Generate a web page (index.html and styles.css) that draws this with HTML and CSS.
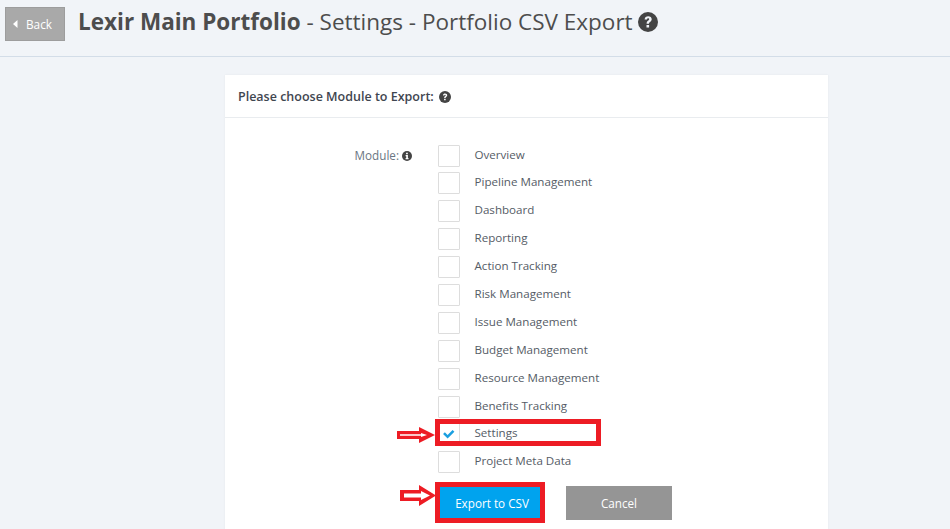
FILE: index.html
```html
<!DOCTYPE html>
<html lang="en">
<head>
<meta charset="utf-8">
<title>Portfolio CSV Export</title>
<link rel="stylesheet" href="styles.css">
</head>
<body>
<header class="top">
  <a class="back"><svg class="back-caret" viewBox="0 0 5 8"><path d="M4.5 0v8L0 4z"/></svg>Back</a>
  <h1 class="title"><strong>Lexir Main Portfolio</strong> - Settings - Portfolio CSV Export
    <svg class="help help-lg" viewBox="0 0 20 20"><circle cx="10" cy="10" r="10"/><path class="glyph" d="M6.600 7.400C6.800 5.200 8.300 4.200 10.200 4.200c2 0 3.500 1.200 3.500 3 0 1.300-.7 2-1.700 2.700-.8.6-1 .9-1 1.800H8.600c0-1.600.4-2.300 1.400-3 .8-.6 1.200-.9 1.200-1.500 0-.6-.4-1-1.100-1-.7 0-1.100.4-1.200 1.200zM8.500 13h2.600v2.600H8.500z"/></svg>
  </h1>
</header>
<main class="card">
  <div class="card-head">Please choose Module to Export:
    <svg class="help help-sm" viewBox="0 0 20 20"><circle cx="10" cy="10" r="10"/><path class="glyph" d="M6.600 7.400C6.800 5.200 8.300 4.200 10.200 4.200c2 0 3.500 1.200 3.500 3 0 1.300-.7 2-1.700 2.700-.8.6-1 .9-1 1.800H8.600c0-1.600.4-2.300 1.400-3 .8-.6 1.200-.9 1.200-1.500 0-.6-.4-1-1.100-1-.7 0-1.100.4-1.200 1.200zM8.500 13h2.600v2.600H8.500z"/></svg>
  </div>
  <div class="form">
    <div class="label">Module:
      <svg class="help help-info" viewBox="0 0 20 20"><circle cx="10" cy="10" r="10"/><path class="glyph" d="M8.200 3.500h3.400v2.800H8.200zM7.200 8h4.600v6.200h1.200v2.300H7.200v-2.300h1.300v-3.900H7.200z"/></svg>
    </div>
    <ul class="modules">
      <li class="row row-short"><span class="box"></span>Overview</li>
      <li class="row"><span class="box"></span>Pipeline Management</li>
      <li class="row"><span class="box"></span>Dashboard</li>
      <li class="row"><span class="box"></span>Reporting</li>
      <li class="row"><span class="box"></span>Action Tracking</li>
      <li class="row"><span class="box"></span>Risk Management</li>
      <li class="row"><span class="box"></span>Issue Management</li>
      <li class="row"><span class="box"></span>Budget Management</li>
      <li class="row"><span class="box"></span>Resource Management</li>
      <li class="row row-short"><span class="box"></span>Benefits Tracking</li>
      <li class="row"><span class="box"><svg class="tick" viewBox="0 0 14 11"><path d="M1 5.500l2-2 3 3L11.500 1l2 2L6 10.500z"/></svg></span>Settings</li>
      <li class="row"><span class="box"></span>Project Meta Data</li>
    </ul>
  </div>
  <div class="actions">
    <a class="btn btn-export">Export to CSV</a>
    <a class="btn btn-cancel">Cancel</a>
  </div>
</main>
<div class="mark mark-row"></div>
<div class="mark mark-btn"></div>
<svg class="arrow arrow-row" viewBox="0 0 38 16"><path class="arrow-body" d="M0 4h22V0l16 8-16 8v-4H0z"/><path class="arrow-core" d="M3 7.300h21V6l6 2-6 2V8.700H3z"/></svg>
<svg class="arrow arrow-btn" viewBox="0 0 36 21"><path class="arrow-body" d="M0 5h19V0l17 10.500L19 21v-5H0z"/><path class="arrow-core" d="M4 8.500h17V6l9 4.500-9 4.500v-2.500H4z"/></svg>
</body>
</html>
```
FILE: styles.css
```css
* { box-sizing: border-box; }
html, body { margin: 0; height: 529px; overflow: hidden; }
body { background: #f1f4f8; font-family: "Open Sans", sans-serif; color: #444; position: relative; }
.top { height: 57px; border-bottom: 1px solid #d3dde8; padding: 7px 0 0 5px; display: flex; align-items: flex-start; }
.back { width: 60px; height: 34px; background: #a9a9a9; border: 1px solid #9d9d9d; color: #fff; font-size: 11.800px; line-height: 32px; display: flex; align-items: center; padding-left: 7px; }
.back-caret { width: 5px; height: 8px; margin-right: 8px; fill: #fff; }
.title { margin: -1px 0 0 13px; font-size: 22.500px; line-height: 31px; font-weight: 400; color: #4d4d4d; white-space: nowrap; }
.title strong { font-weight: 700; }
.help { fill: #444; vertical-align: middle; }
.glyph { fill: #f1f4f8; }
.help-lg { width: 20px; height: 20px; margin: -3px 0 0 0; }
.help-sm { width: 12px; height: 12px; margin: -2px 0 0 2px; }
.help-sm .glyph, .help-info .glyph { fill: #fff; }
.help-info { width: 10px; height: 10px; margin: -2px 0 0 0; }
.card { width: 603px; height: 472px; margin: 18px 0 0 225px; background: #fff; box-shadow: 0 0 2px rgba(0,0,0,.06); }
.card-head { height: 43px; border-bottom: 1px solid #e9ecef; padding: 0 13px; font-size: 12.500px; font-weight: 600; line-height: 44px; color: #3f4650; }
.form { display: flex; padding: 27px 0 0 0; }
.label { width: 213px; padding-right: 26px; text-align: right; font-size: 11.700px; line-height: 20px; color: #6b7683; }
.modules { list-style: none; margin: 0; padding: 0; }
.row { height: 28px; display: flex; font-size: 11.600px; line-height: 20px; color: #555c66; }
.row-short { height: 27px; }
.box { width: 22px; height: 22px; margin-right: 14.500px; border: 1px solid #ddd; border-radius: 1px; background: #fff; display: flex; align-items: center; justify-content: center; }
.tick { width: 13px; height: 10px; fill: #1a9fe0; margin: -1px 0 0 -1px; }
.actions { display: flex; gap: 24px; margin: 7px 0 0 215px; }
.btn { height: 34px; font-size: 11.700px; line-height: 34px; text-align: center; color: #fff; }
.btn-export { width: 102px; padding-left: 2px; background: #00a3ee; }
.btn-cancel { width: 106px; background: #959595; }
.mark { position: absolute; border: 5px solid #ed1c24; }
.mark-row { left: 435px; top: 419px; width: 166px; height: 27px; }
.mark-btn { left: 435px; top: 482px; width: 110px; height: 41px; }
.arrow { position: absolute; }
.arrow-body { fill: #ed1c24; }
.arrow-core { fill: #fff; }
.arrow-row { left: 397px; top: 427px; width: 38px; height: 16px; }
.arrow-btn { left: 400px; top: 485px; width: 36px; height: 21px; }
```
